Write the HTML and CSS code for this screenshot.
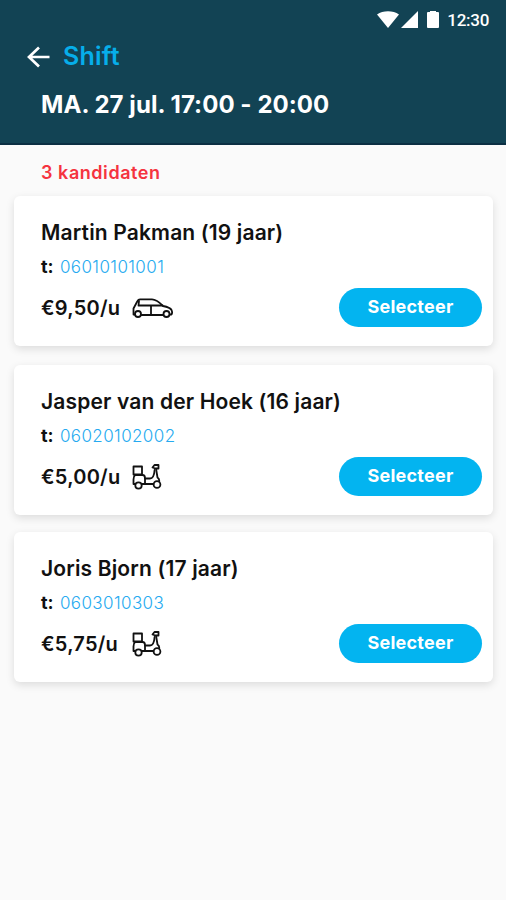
FILE: index.html
```
<!DOCTYPE html>
<html lang="nl">
<head>
    <meta charset="UTF-8">
    <meta name="viewport" content="width=device-width, initial-scale=1.0">
    <title>Shift</title>
    <link rel="stylesheet" href="styles.css">
</head>
<body>

    <!-- icons used more than once -->
    <svg class="defs" width="0" height="0">
        <symbol id="scooter" viewBox="0 0 30 26">
            <g fill="none" stroke="#111" stroke-width="1.8" stroke-linejoin="round" stroke-linecap="round">
                <path d="M1.5 2.5h8.500v8h-8.500z"/>
                <path d="M3 11h7.500c1.800 0 2.500 1.400 2.500 3.200v5.800h-3M3 20H1.500v-4.500c0-2 .5-3.500 1.500-4.500"/>
                <path d="M10 20h11.500M13 14.500h5c2.800 0 4.200-2.500 4.600-8.500"/>
                <path d="M20.500 3.500l2-2.500h4v3.500h-3zM24 4.500l1.500 9c1.200.8 1.800 2 1.800 3.500"/>
                <circle cx="6.500" cy="21.500" r="3.200"/>
                <circle cx="25" cy="20.500" r="3.400"/>
            </g>
        </symbol>
    </svg>

    <header class="header">
        <div class="status-bar">
            <svg class="wifi" viewBox="0 0 22 17"><path d="M0 3.500C6-.8 16-.8 22 3.500L11 17z"/></svg>
            <svg class="signal" viewBox="0 0 17 17"><path d="M17 0v17H0z"/></svg>
            <svg class="battery" viewBox="0 0 12 17"><path d="M3 0h6v1H11q1 0 1 1V16q0 1-1 1H1q-1 0-1-1V2q0-1 1-1h2z"/></svg>
            <span class="clock">12:30</span>
        </div>
        <div class="nav">
            <svg class="back" viewBox="0 0 24 22"><path d="M12 1.500L2 11l10 9.500M2 11h20.500"/></svg>
            <span class="nav-title">Shift</span>
        </div>
        <h1 class="date">MA. 27 jul. 17:00 - 20:00</h1>
    </header>

    <main class="content">
        <div class="count">3 kandidaten</div>

        <div class="card">
            <div class="name">Martin Pakman (19 jaar)</div>
            <div class="phone">t: <a>06010101001</a></div>
            <div class="bottom">
                <span class="price">€9,50/u</span>
                <svg class="car" viewBox="0 0 41 20">
                    <g fill="none" stroke="#111" stroke-width="1.8" stroke-linejoin="round" stroke-linecap="round">
                        <path d="M3 16.500H1.500v-6L5.500 3c.6-1.200 1.300-1.600 2.500-1.600h12c3 0 7.500 3 11 6.600 4 .8 7.500 2 8.500 4 .7 1.600.7 3.500 0 4.500H38"/>
                        <path d="M9 17h22"/>
                        <path d="M7 3L6.500 7.500h24M19 7.500V17"/>
                        <circle cx="6" cy="16" r="3"/>
                        <circle cx="34.500" cy="16" r="3"/>
                    </g>
                </svg>
                <button class="select">Selecteer</button>
            </div>
        </div>

        <div class="card">
            <div class="name">Jasper van der Hoek (16 jaar)</div>
            <div class="phone">t: <a>06020102002</a></div>
            <div class="bottom">
                <span class="price">€5,00/u</span>
                <svg class="scooter"><use href="#scooter"/></svg>
                <button class="select">Selecteer</button>
            </div>
        </div>

        <div class="card">
            <div class="name">Joris Bjorn (17 jaar)</div>
            <div class="phone">t: <a>0603010303</a></div>
            <div class="bottom">
                <span class="price">€5,75/u</span>
                <svg class="scooter"><use href="#scooter"/></svg>
                <button class="select">Selecteer</button>
            </div>
        </div>
    </main>

</body>
</html>
```
FILE: styles.css
```
* { box-sizing: border-box; }
body { margin: 0; min-height: 900px; background: #fafafa; color: #111; font-family: Inter, sans-serif; }
.defs { display: block; }

.header { height: 145px; background: #124354; border-bottom: 2px solid #0b2f43; color: #fff; }
.status-bar { display: flex; align-items: center; height: 39px; padding-right: 17px; justify-content: flex-end; }
.status-bar svg { fill: #fff; }
.wifi { width: 22px; height: 17px; margin-right: 2px; }
.signal { width: 17px; height: 17px; margin-right: 9px; }
.battery { width: 12px; height: 17px; margin-right: 8px; }
.clock { font: 500 17px/20px Roboto, sans-serif; letter-spacing: -0.3px; }

.nav { display: flex; align-items: center; height: 34px; padding-left: 27px; }
.back { width: 24px; height: 22px; margin: 2px 12px 0 0; fill: none; stroke: #fff; stroke-width: 2.7; }
.nav-title { color: #06aeea; font-size: 25px; line-height: 30px; font-weight: 600; letter-spacing: 0.2px; }
.date { margin: 17px 0 0 41px; font-size: 24px; line-height: 30px; font-weight: 700; letter-spacing: 0.05px; white-space: nowrap; }

.content { padding: 0 13px 0 14px; }
.count { height: 51px; padding: 17px 0 0 27px; color: #f5333f; font-size: 18px; line-height: 22px; font-weight: 600; letter-spacing: 0.55px; }

.card { height: 150px; margin-bottom: 19px; padding: 23px 11px 0 27px; background: #fff; border-radius: 6px; box-shadow: 0 3px 8px rgba(0, 0, 0, 0.12); }
.card + .card { margin-bottom: 17px; }
.name { font-size: 21px; line-height: 28px; font-weight: 600; letter-spacing: 0.15px; white-space: nowrap; }
.card:first-of-type .name { letter-spacing: 0.2px; }
.phone { margin-top: 7px; font-size: 18px; line-height: 26px; font-weight: 700; }
.phone a { margin-left: 2px; color: #25aaf0; font-size: 17px; font-weight: 300; letter-spacing: 0.4px; }
.bottom { display: flex; align-items: center; height: 39px; margin-top: 8px; }
.price { width: 91px; font-size: 20px; font-weight: 600; letter-spacing: 0.25px; }
.car { width: 41px; height: 20px; }
.scooter { width: 30px; height: 26px; }
.select {
    width: 143px; height: 39px; margin-left: auto; padding: 0 0 2px; border: 0; border-radius: 20px;
    background: #03b4f0; color: #fff; font-family: inherit; font-size: 18px; font-weight: 700; letter-spacing: 0.25px;
}
```
